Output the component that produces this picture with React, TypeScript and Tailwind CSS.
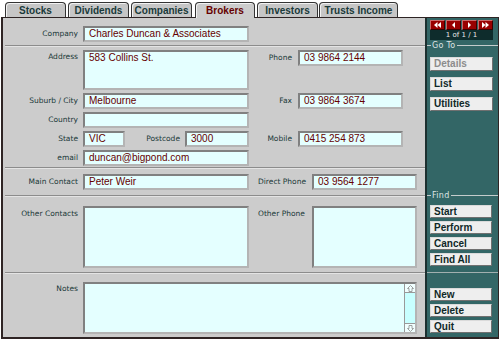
import React from 'react';

const tabs = [
  { name: 'Stocks', cls: 'w-[61px]' },
  { name: 'Dividends', cls: 'w-[61px] ml-[2px]' },
  { name: 'Companies', cls: 'w-[61px] ml-[2px]' },
  { name: 'Brokers', cls: 'w-[60px] ml-[3px]', active: true },
  { name: 'Investors', cls: 'w-[61px] ml-[2px]' },
  { name: 'Trusts Income', cls: 'w-[79px] ml-[1px]' },
];

const fieldBg = 'bg-[#e4ffff]';

const Label = ({ children, className = '' }: { children?: React.ReactNode; className?: string }) => (
  <div
    className={`flex text-[7.5px] leading-[10px] text-[#1a3838] font-['DejaVu_Sans',sans-serif] whitespace-nowrap ${className}`}
  >
    {children}
  </div>
);

const Field = ({ children, className = '' }: { children?: React.ReactNode; className?: string }) => (
  <div
    className={`border-2 border-t-[#808080] border-l-[#808080] border-b-[#b4b4b4] border-r-[#b4b4b4] ${fieldBg} pl-[4px] text-[10px] leading-[12px] text-[#660000] whitespace-nowrap overflow-hidden ${className}`}
  >
    {children}
  </div>
);

const Separator = () => (
  <div className="ml-[2px] h-[2px] border-t border-b border-t-[#8c8c8c] border-b-[#e4e4e4]" />
);

const Legend = ({ label, className = '' }: { label: string; className?: string }) => (
  <div className={`flex items-center h-[9px] ${className}`}>
    <div className="w-[4px] h-px bg-[#c4cccc]" />
    <span className="px-[1px] text-[8px] leading-[9px] text-[#dde4e4] font-['DejaVu_Sans',sans-serif] tracking-[0.3px]">
      {label}
    </span>
    <div className="flex-1 h-px bg-[#c4cccc]" />
  </div>
);

const Button = ({ label, className = '', disabled }: { label: string; className?: string; disabled?: boolean }) => (
  <div
    className={`ml-[3px] bg-[#eeeeee] border border-[#dadada] border-r-[#707070] border-b-[#707070] pl-[3px] text-[10px] leading-[11px] font-bold ${
      disabled ? 'text-[#8c8c8c]' : 'text-[#102828]'
    } ${className}`}
  >
    {label}
  </div>
);

const NavButton = ({ dir }: { dir: 'first' | 'prev' | 'next' | 'last' }) => (
  <div className="w-[15px] h-[10px] bg-[#990000] border border-[#c86a6a] border-r-[#3a0000] border-b-[#3a0000] flex items-center justify-center">
    <svg width="9" height="6" viewBox="0 0 9 6" fill="#ffffff">
      {dir === 'first' && (
        <>
          <polygon points="4.5,0 4.5,6 1,3" />
          <polygon points="8,0 8,6 4.5,3" />
        </>
      )}
      {dir === 'prev' && <polygon points="6,0 6,6 3,3" />}
      {dir === 'next' && <polygon points="3,0 3,6 6,3" />}
      {dir === 'last' && (
        <>
          <polygon points="1,0 1,6 4.5,3" />
          <polygon points="4.5,0 4.5,6 8,3" />
        </>
      )}
    </svg>
  </div>
);

const ScrollArrow = ({ down }: { down?: boolean }) => (
  <div className={`h-[9px] bg-[#f0ffff] flex items-center justify-center ${down ? 'border-t border-[#999999]' : 'border-b border-[#999999]'}`}>
    <svg width="7" height="7" viewBox="0 0 7 7" className={down ? 'rotate-180' : ''}>
      <path d="M3.5 0.5 L6.5 3.5 H5 V6.5 H2 V3.5 H0.5 Z" fill="none" stroke="#8a8a8a" strokeWidth="0.8" />
    </svg>
  </div>
);

export default function App() {
  return (
    <div className="w-[500px] h-[341px] bg-white overflow-hidden font-['Liberation_Sans',Arial,sans-serif]">
      {/* Tabs */}
      <div className="ml-[1px] w-[498px] h-[18px] flex items-end pl-[4px] border-b border-[#2e2424]">
        {tabs.map((t) => (
          <div
            key={t.name}
            className={`${t.cls} ${
              t.active
                ? 'h-[16px] -mb-px relative z-10 bg-[#cccccc] text-[#660000]'
                : 'h-[15px] bg-[#c6c6c6] text-[#1a3a3a]'
            } border border-b-0 border-[#333333] rounded-t-[4px] shadow-[inset_1px_1px_0_#f2f2f2] flex items-center justify-center pt-[1px] text-[10px] font-bold leading-none`}
          >
            {t.name}
          </div>
        ))}
      </div>

      {/* Frame */}
      <div className="ml-[1px] w-[498px] h-[321px] flex border-l-2 border-r border-b-2 border-[#2e2424]">
        {/* Form */}
        <div className="w-[422px] bg-[#cccccc] flex flex-col">
          <div className="h-[27px] pt-[8px] flex">
            <Label className="w-[80px] h-[16px] pr-[5px] items-center justify-end">Company</Label>
            <Field className="w-[166px] h-[16px]">Charles Duncan &amp; Associates</Field>
          </div>
          <Separator />

          <div className="h-[120px] pt-[3px] grid grid-cols-[80px_166px_49px_105px] grid-rows-[40px_16px_16px_16px_16px] gap-y-[3px]">
            <Label className="pr-[5px] pt-[2px] justify-end">Address</Label>
            <Field>583 Collins St.</Field>
            <Label className="h-[16px] pr-[6px] items-center justify-end">Phone</Label>
            <Field className="h-[16px]">03 9864 2144</Field>

            <Label className="pr-[5px] items-center justify-end">Suburb / City</Label>
            <Field>Melbourne</Field>
            <Label className="pr-[6px] items-center justify-end">Fax</Label>
            <Field>03 9864 3674</Field>

            <Label className="pr-[5px] items-center justify-end">Country</Label>
            <Field />
            <div />
            <div />

            <Label className="pr-[5px] items-center justify-end">State</Label>
            <div className="flex">
              <Field className="w-[42px]">VIC</Field>
              <Label className="flex-1 pr-[5px] items-center justify-end">Postcode</Label>
              <Field className="w-[64px]">3000</Field>
            </div>
            <Label className="pr-[6px] items-center justify-end">Mobile</Label>
            <Field>0415 254 873</Field>

            <Label className="pr-[5px] items-center justify-end">email</Label>
            <Field>duncan@bigpond.com</Field>
          </div>
          <Separator />

          <div className="h-[26px] pt-[5px] flex">
            <Label className="w-[80px] h-[16px] pr-[5px] items-center justify-end">Main Contact</Label>
            <Field className="w-[166px] h-[16px]">Peter Weir</Field>
            <Label className="ml-[9px] w-[54px] h-[16px] items-center">Direct Phone</Label>
            <Field className="w-[105px] h-[16px]">03 9564 1277</Field>
          </div>
          <Separator />

          <div className="h-[75px] pt-[9px] flex">
            <Label className="w-[80px] pr-[5px] pt-[3px] justify-end">Other Contacts</Label>
            <Field className="w-[166px] h-[62px]" />
            <Label className="ml-[9px] w-[54px] pt-[3px]">Other Phone</Label>
            <Field className="w-[105px] h-[62px]" />
          </div>
          <Separator />

          <div className="h-[63px] pt-[8px] flex">
            <Label className="w-[80px] pr-[5px] pt-[2px] justify-end">Notes</Label>
            <div className={`w-[334px] h-[52px] flex border-2 border-t-[#808080] border-l-[#808080] border-b-[#b4b4b4] border-r-[#b4b4b4] ${fieldBg}`}>
              <div className="flex-1" />
              <div className="w-[11px] flex flex-col border-l border-[#999999]">
                <ScrollArrow />
                <div className="flex-1 bg-[#c8ffff]" />
                <ScrollArrow down />
              </div>
            </div>
          </div>
        </div>

        {/* Side panel */}
        <div className="flex-1 bg-[#336666] border-l-2 border-[#1c3030] flex flex-col">
          <div className="pl-[3px] pt-[2px]">
            <div className="flex gap-[1px]">
              <NavButton dir="first" />
              <NavButton dir="prev" />
              <NavButton dir="next" />
              <NavButton dir="last" />
            </div>
            <div className="w-[63px] h-[10px] bg-[#0e2c2c] text-[7px] leading-[10px] text-[#e8e8e8] text-center font-['DejaVu_Sans',sans-serif]">
              1 of 1 / 1
            </div>
          </div>
          <Legend label="Go To" className="mt-[1px]" />
          <Button label="Details" disabled className="mt-[7px] w-[63px] h-[14px] leading-[12px]" />
          <Button label="List" className="mt-[6px] w-[63px] h-[14px] leading-[12px]" />
          <Button label="Utilities" className="mt-[6px] w-[63px] h-[14px] leading-[12px]" />

          <Legend label="Find" className="mt-[80px]" />
          <Button label="Start" className="mt-[5px] w-[62px] h-[13px]" />
          <Button label="Perform" className="mt-[3px] w-[62px] h-[13px]" />
          <Button label="Cancel" className="mt-[3px] w-[62px] h-[13px]" />
          <Button label="Find All" className="mt-[3px] w-[62px] h-[13px]" />

          <div className="mt-[6px] h-px bg-[#a2b0b0]" />
          <Button label="New" className="mt-[15px] w-[62px] h-[13px]" />
          <Button label="Delete" className="mt-[3px] w-[62px] h-[13px]" />
          <Button label="Quit" className="mt-[3px] w-[62px] h-[13px]" />
        </div>
      </div>
    </div>
  );
}
